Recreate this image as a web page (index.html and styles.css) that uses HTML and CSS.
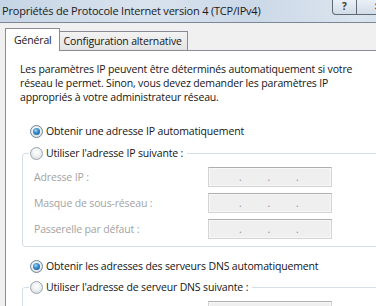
FILE: index.html
```html
<!DOCTYPE html>
<html lang="fr">
<head>
<meta charset="utf-8">
<title>Propriétés de Protocole Internet version 4 (TCP/IPv4)</title>
<link rel="stylesheet" href="styles.css">
</head>
<body>
<div class="window">
  <div class="titlebar">
    <span class="title">Propriétés de Protocole Internet version 4 (TCP/IPv4)</span>
    <div class="caption">
      <div class="cbtn help">?</div>
      <div class="cbtn close">✕</div>
    </div>
  </div>
  <div class="client">
    <div class="tabs">
      <div class="tab active">Général</div>
      <div class="tab">Configuration alternative</div>
    </div>
    <div class="panel">
      <p class="intro">Les paramètres IP peuvent être déterminés automatiquement si votre<br>réseau le permet. Sinon, vous devez demander les paramètres IP<br>appropriés à votre administrateur réseau.</p>

      <div class="option first"><span class="radio checked"></span><span>Obtenir une adresse IP automatiquement</span></div>

      <fieldset class="group">
        <legend class="option"><span class="radio"></span><span>Utiliser l'adresse IP suivante :</span></legend>
        <div class="row"><span class="lbl">Adresse IP :</span><div class="ip"><span>.</span><span>.</span><span>.</span></div></div>
        <div class="row"><span class="lbl">Masque de sous-réseau :</span><div class="ip"><span>.</span><span>.</span><span>.</span></div></div>
        <div class="row"><span class="lbl">Passerelle par défaut :</span><div class="ip"><span>.</span><span>.</span><span>.</span></div></div>
      </fieldset>

      <div class="option dns"><span class="radio checked"></span><span>Obtenir les adresses des serveurs DNS automatiquement</span></div>

      <fieldset class="group group2">
        <legend class="option"><span class="radio"></span><span>Utiliser l'adresse de serveur DNS suivante :</span></legend>
        <div class="row"><span class="lbl"></span><div class="ip"></div></div>
      </fieldset>
    </div>
  </div>
</div>
</body>
</html>
```
FILE: styles.css
```css
html, body {
  margin: 0;
  padding: 0;
  overflow: hidden;
}
body {
  width: 376px;
  height: 306px;
  background: #f0f0f0;
  font-family: "Open Sans", "Noto Sans", sans-serif;
  font-size: 10.5px;
  letter-spacing: -0.15px;
  color: #151515;
}
.window {
  width: 420px;
}
.titlebar {
  height: 22px;
  display: flex;
  align-items: flex-start;
  background: linear-gradient(90deg, #c6d5e5 0%, #d9e3ee 35%, #cbd8e7 60%, #dbe5ef 85%, #cfdbe8 100%);
  border-bottom: 1px solid #7b8794;
}
.title {
  padding: 3px 0 0 2px;
  font-size: 11px;
  letter-spacing: -0.2px;
  line-height: 16px;
  color: #1a1a1a;
  white-space: nowrap;
}
.caption {
  margin-left: auto;
  margin-right: 20px;
  display: flex;
}
.cbtn {
  height: 14px;
  border: 1px solid #5f6a75;
  border-top: none;
  background: linear-gradient(#eaf0f6, #d2dce7);
  font-size: 10px;
  line-height: 13px;
  text-align: center;
  color: #3a3a3a;
  font-weight: bold;
  letter-spacing: 0;
}
.help {
  width: 23px;
  border-bottom-left-radius: 4px;
}
.close {
  width: 42px;
  border-left: none;
}
.client {
  padding: 5px 0 0 5px;
}
.tabs {
  display: flex;
  align-items: flex-end;
}
.tab {
  box-sizing: border-box;
  height: 19px;
  border: 1px solid #898c95;
  border-left: none;
  border-bottom: none;
  background: linear-gradient(#f3f3f3, #e3e3e3);
  padding: 1px 5px 0 4px;
  line-height: 16px;
  white-space: nowrap;
}
.tab.active {
  height: 23px;
  margin-bottom: -1px;
  border-left: 1px solid #898c95;
  background: #fff;
  padding: 3px 7px 0 8px;
  position: relative;
}
.panel {
  background: #fff;
  border-top: 1px solid #898c95;
  border-left: 1px solid #898c95;
  padding: 11px 0 0 14px;
  height: 300px;
}
.intro {
  margin: 0;
  line-height: 14px;
  white-space: nowrap;
}
.option {
  display: flex;
  align-items: center;
  gap: 3px;
  height: 16px;
  white-space: nowrap;
}
.option.first {
  margin: 19px 0 0 10px;
}
.option.dns {
  margin: 11px 0 0 10px;
}
.radio {
  box-sizing: border-box;
  width: 13px;
  height: 13px;
  border-radius: 50%;
  border: 1px solid #9aa3ab;
  background: radial-gradient(circle at 50% 40%, #ffffff 0%, #eef0f2 45%, #d3d7db 100%);
  display: flex;
  align-items: center;
  justify-content: center;
}
.radio.checked {
  border-color: #6f8497;
}
.radio.checked::after {
  content: "";
  width: 7px;
  height: 7px;
  border-radius: 50%;
  background: radial-gradient(circle at 40% 35%, #9fd6f7 0%, #3a8fd0 40%, #0f4a8a 100%);
}
.group {
  margin: 6px 0 0 2px;
  padding: 0 0 7px 6px;
  border: 1px solid #d5dfe5;
  border-radius: 3px;
  width: 400px;
}
.group legend {
  padding: 0 4px 0 1px;
}
.group2 {
  margin-top: 5px;
}
.row {
  display: flex;
  align-items: center;
  height: 20px;
  margin: 6px 0 0 5px;
}
.lbl {
  width: 174px;
  color: #a3a3a3;
}
.ip {
  box-sizing: border-box;
  width: 124px;
  height: 20px;
  border: 1px solid #d4d4d4;
  border-top-color: #aeaeae;
  background: #efefef;
  box-shadow: inset 0 0 0 1px #f7f7f7;
  display: flex;
  align-items: center;
  padding-left: 30px;
  gap: 26px;
  color: #8a8a8a;
  font-size: 10px;
}
```
